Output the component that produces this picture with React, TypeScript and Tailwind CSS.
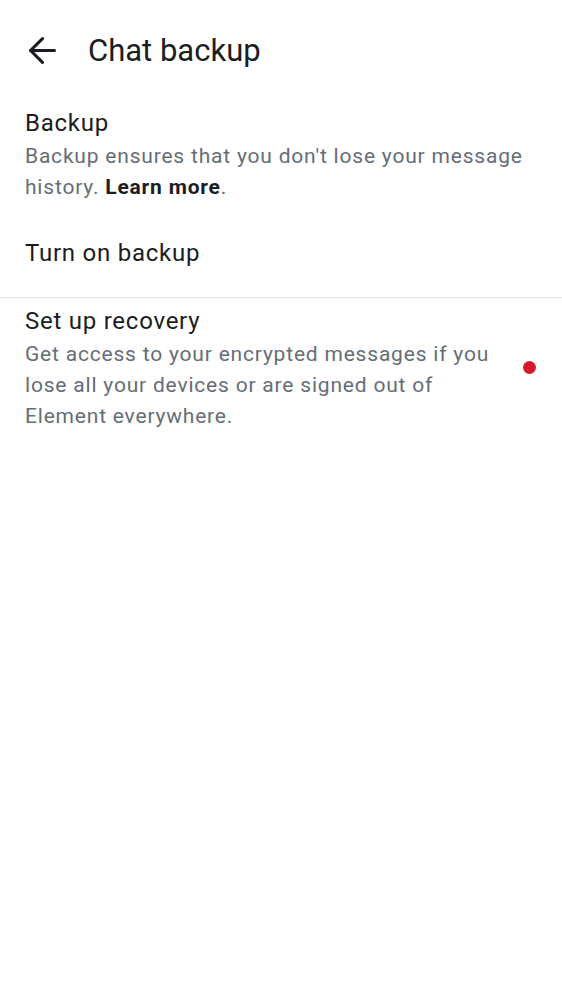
import { ArrowLeft } from "lucide-react";

export default function App() {
  return (
    <div className="min-h-screen bg-white font-['Roboto',sans-serif] text-[#1b1d22]">
      <header className="flex h-[100px] items-center pl-[22px]">
        <ArrowLeft size={41} strokeWidth={1.8} />
        <h1 className="ml-[25px] text-[31px] leading-none">Chat backup</h1>
      </header>

      <div className="px-[25px] pt-[5px]">
        <div className="text-[24px] leading-[36px] tracking-[0.75px]">Backup</div>
        <p className="text-[21px] leading-[31px] tracking-[0.8px] text-[#656d77]">
          Backup ensures that you don't lose your message history.{" "}
          <span className="font-bold text-[#1b1d22]">Learn more</span>.
        </p>
      </div>

      <div className="px-[25px] pt-[32px] pb-[26px]">
        <div className="text-[24px] leading-[36px] tracking-[0.75px]">Turn on backup</div>
      </div>

      <div className="h-px bg-[#e1e3e6]" />

      <div className="flex items-center gap-[20px] pl-[25px] pr-[26px] pt-[5px]">
        <div className="flex-1">
          <div className="text-[24px] leading-[36px] tracking-[0.75px]">Set up recovery</div>
          <p className="text-[21px] leading-[31px] tracking-[0.8px] text-[#656d77]">
            Get access to your encrypted messages if you lose all your devices or are signed out of Element everywhere.
          </p>
        </div>
        <span className="h-[13px] w-[13px] shrink-0 rounded-full bg-[#d51928]" />
      </div>
    </div>
  );
}
